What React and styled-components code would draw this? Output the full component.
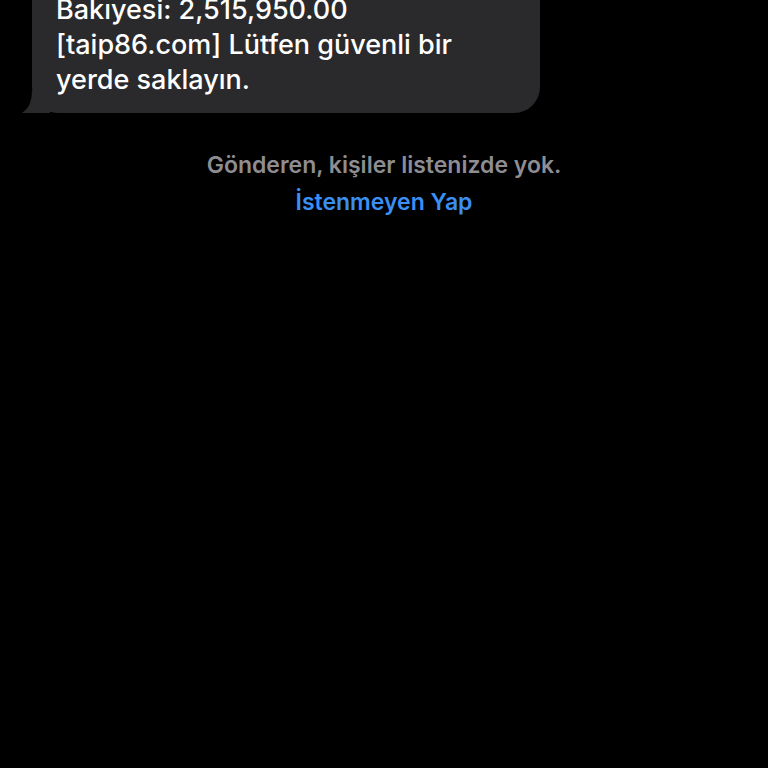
import React from "react";
import styled, { createGlobalStyle } from "styled-components";

const Global = createGlobalStyle`
  html, body { margin: 0; padding: 0; background: #000; }
  body { font-family: Inter, "Noto Sans", sans-serif; -webkit-font-smoothing: antialiased; }
  #root { min-height: 768px; background: #000; overflow: hidden; }
`;

const Screen = styled.div`
  width: 768px;
  height: 768px;
  background: #000;
  overflow: hidden;
  display: flex;
  flex-direction: column;
`;

const Thread = styled.div`
  display: flex;
  flex-direction: column;
  align-items: flex-start;
  padding-left: 32px;
  margin-top: -8px;
`;

const Bubble = styled.div`
  position: relative;
  width: 508px;
  box-sizing: border-box;
  background: #2a2a2c;
  color: #fff;
  border-radius: 0 0 26px 26px;
  padding: 0 24px 16px 24px;
  font-size: 27px;
  line-height: 35px;
  font-weight: 500;
  letter-spacing: 0;

  &::before {
    content: "";
    position: absolute;
    left: -10px;
    bottom: 0;
    width: 28px;
    height: 22px;
    background: #2a2a2c;
    clip-path: path("M10 0 L28 0 L28 22 L0 22 Q10 16 10 0 Z");
  }
`;

const Line = styled.div`
  white-space: nowrap;
`;

const Notice = styled.div`
  margin-top: 38px;
  display: flex;
  flex-direction: column;
  align-items: center;
  gap: 8px;
  font-weight: 600;
  font-size: 23px;
  line-height: 29px;
`;

const Gray = styled.div`
  color: #8d8d92;
`;

const Link = styled.div`
  color: #3b8ff3;
`;

export default function App() {
  return (
    <Screen>
      <Global />
      <Thread>
        <Bubble>
          <Line>Bakıyesi: 2,515,950.00</Line>
          <Line>[taip86.com] Lütfen güvenli bir</Line>
          <Line>yerde saklayın.</Line>
        </Bubble>
      </Thread>
      <Notice>
        <Gray>Gönderen, kişiler listenizde yok.</Gray>
        <Link>İstenmeyen Yap</Link>
      </Notice>
    </Screen>
  );
}
